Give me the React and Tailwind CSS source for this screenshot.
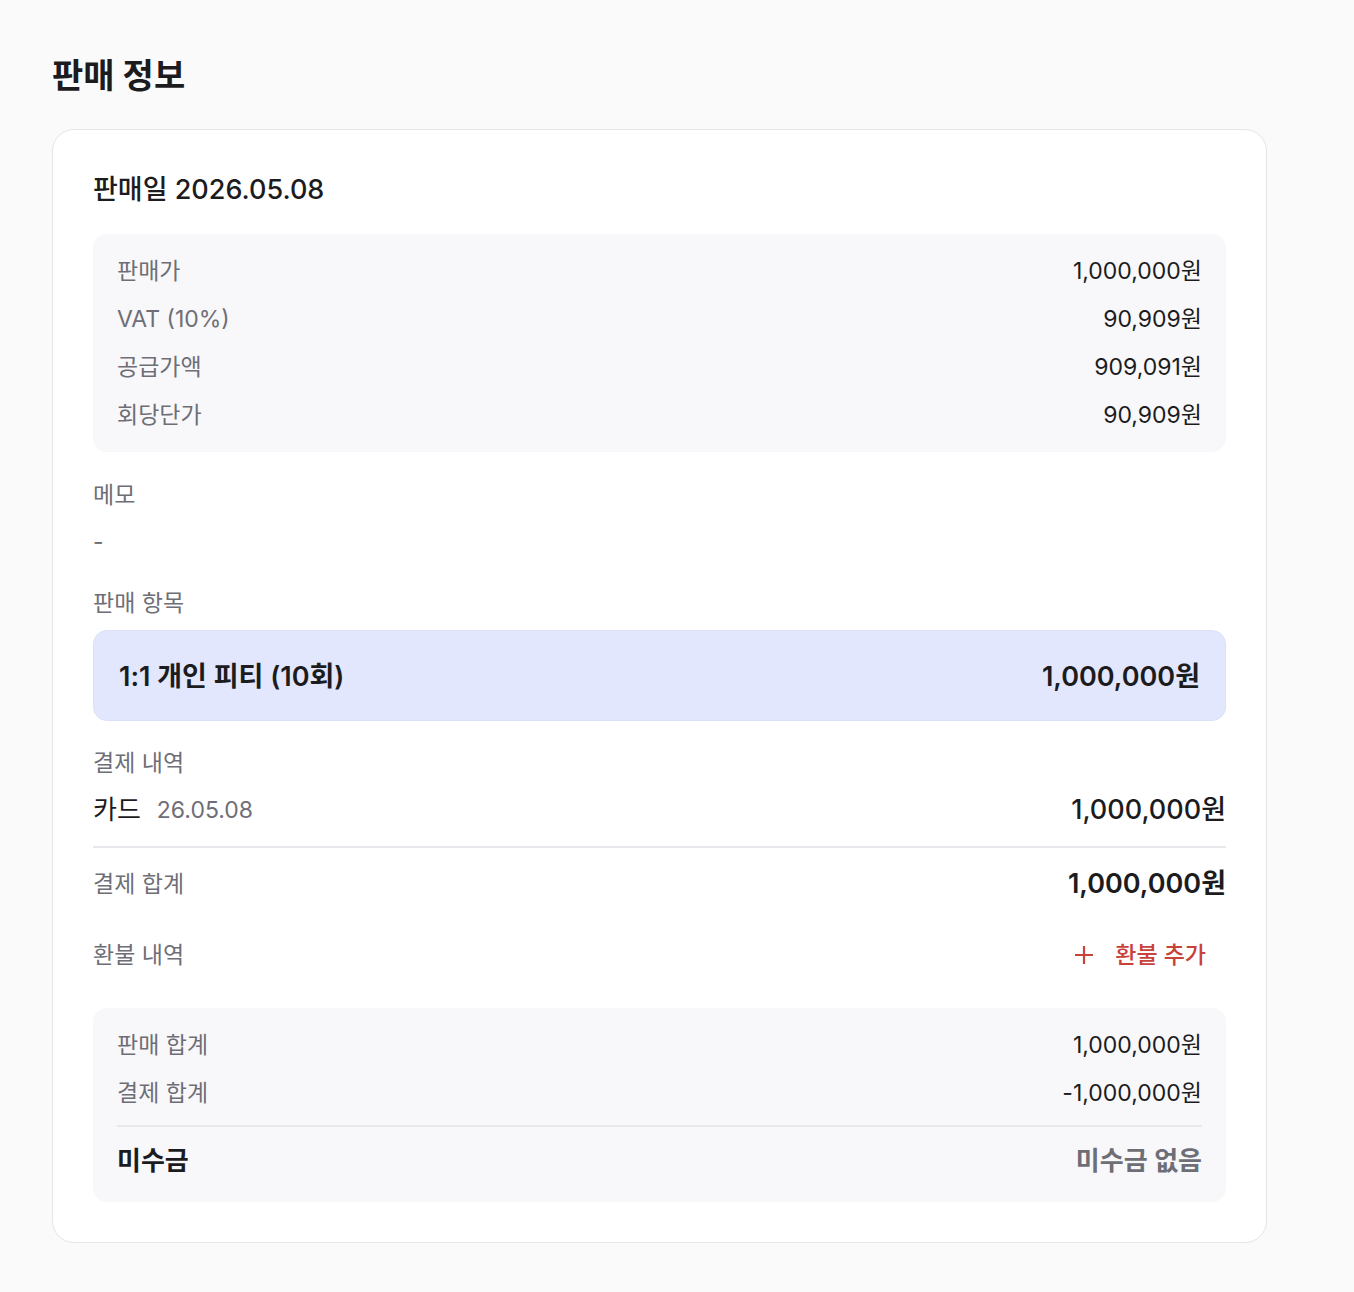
import React from 'react';

const font = { fontFamily: '"Inter", "Noto Sans CJK KR", sans-serif' };

const Row = ({ label, value }) => (
    <div className="flex items-center justify-between leading-[30px] text-[23px]">
        <span className="text-[#6e6e76]">{label}</span>
        <span className="text-[#1c1c1e]">{value}</span>
    </div>
);

const PlusIcon = () => (
    <svg width="20" height="20" viewBox="0 0 20 20" fill="none" stroke="currentColor" strokeWidth="2.2">
        <path d="M10 1v18M1 10h18" />
    </svg>
);

const App = () => {
    const prices = [
        ['판매가', '1,000,000원'],
        ['VAT (10%)', '90,909원'],
        ['공급가액', '909,091원'],
        ['회당단가', '90,909원'],
    ];

    return (
        <div className="min-h-screen bg-[#fafafa] px-[52px] pt-[56px] pb-[48px]" style={font}>
            <h1 className="text-[34px] leading-[40px] font-bold text-[#1c1c1e]">판매 정보</h1>

            <div className="mt-[33px] w-[1215px] rounded-[22px] border border-[#e5e5ea] bg-white p-[40px]">
                <div className="text-[27px] leading-[40px] font-medium text-[#1c1c1e]">판매일 2026.05.08</div>

                <div className="mt-[24px] flex flex-col gap-[18px] rounded-[14px] bg-[#f8f8fa] px-[24px] py-[22px]">
                    {prices.map(([label, value]) => (
                        <Row key={label} label={label} value={value} />
                    ))}
                </div>

                <div className="mt-[27px] text-[23px] leading-[32px] text-[#6e6e76]">메모</div>
                <div className="mt-[15px] text-[23px] leading-[32px] text-[#6e6e76]">-</div>

                <div className="mt-[29px] text-[23px] leading-[32px] text-[#6e6e76]">판매 항목</div>
                <div className="mt-[11px] flex h-[91px] items-center justify-between rounded-[14px] border border-[#dbe1f6] bg-[#e2e7fd] px-[25px] pt-[3px] text-[27px] font-semibold text-[#1c1c1e]">
                    <span>1:1 개인 피티 (10회)</span>
                    <span>1,000,000원</span>
                </div>

                <div className="mt-[26px] text-[23px] leading-[32px] text-[#6e6e76]">결제 내역</div>
                <div className="mt-[13px] flex items-center justify-between leading-[36px]">
                    <div className="flex items-center gap-[16px]">
                        <span className="text-[26px] text-[#1c1c1e]">카드</span>
                        <span className="text-[23px] text-[#6e6e76]">26.05.08</span>
                    </div>
                    <span className="text-[27px] font-medium text-[#1c1c1e]">1,000,000원</span>
                </div>
                <div className="mt-[18px] h-[2px] bg-[#e8e8ec]" />

                <div className="mt-[18px] flex items-center justify-between leading-[36px]">
                    <span className="text-[23px] text-[#6e6e76]">결제 합계</span>
                    <span className="text-[27px] font-semibold text-[#1c1c1e]">1,000,000원</span>
                </div>

                <div className="mt-[35px] flex items-center justify-between leading-[36px]">
                    <span className="text-[23px] text-[#6e6e76]">환불 내역</span>
                    <button className="flex items-center gap-[21px] pr-[20px] text-[23px] font-medium text-[#c8413a]">
                        <PlusIcon />
                        <span>환불 추가</span>
                    </button>
                </div>

                <div className="mt-[35px] rounded-[14px] bg-[#f8f8fa] px-[24px] pt-[22px] pb-[23px]">
                    <div className="flex flex-col gap-[18px]">
                        <Row label="판매 합계" value="1,000,000원" />
                        <Row label="결제 합계" value="-1,000,000원" />
                    </div>
                    <div className="mt-[17px] h-[2px] bg-[#e8e8ec]" />
                    <div className="mt-[16px] flex items-center justify-between leading-[36px] text-[26px]">
                        <span className="font-bold text-[#1c1c1e]">미수금</span>
                        <span className="font-semibold text-[#6e6e76]">미수금 없음</span>
                    </div>
                </div>
            </div>
        </div>
    );
};

export default App;
